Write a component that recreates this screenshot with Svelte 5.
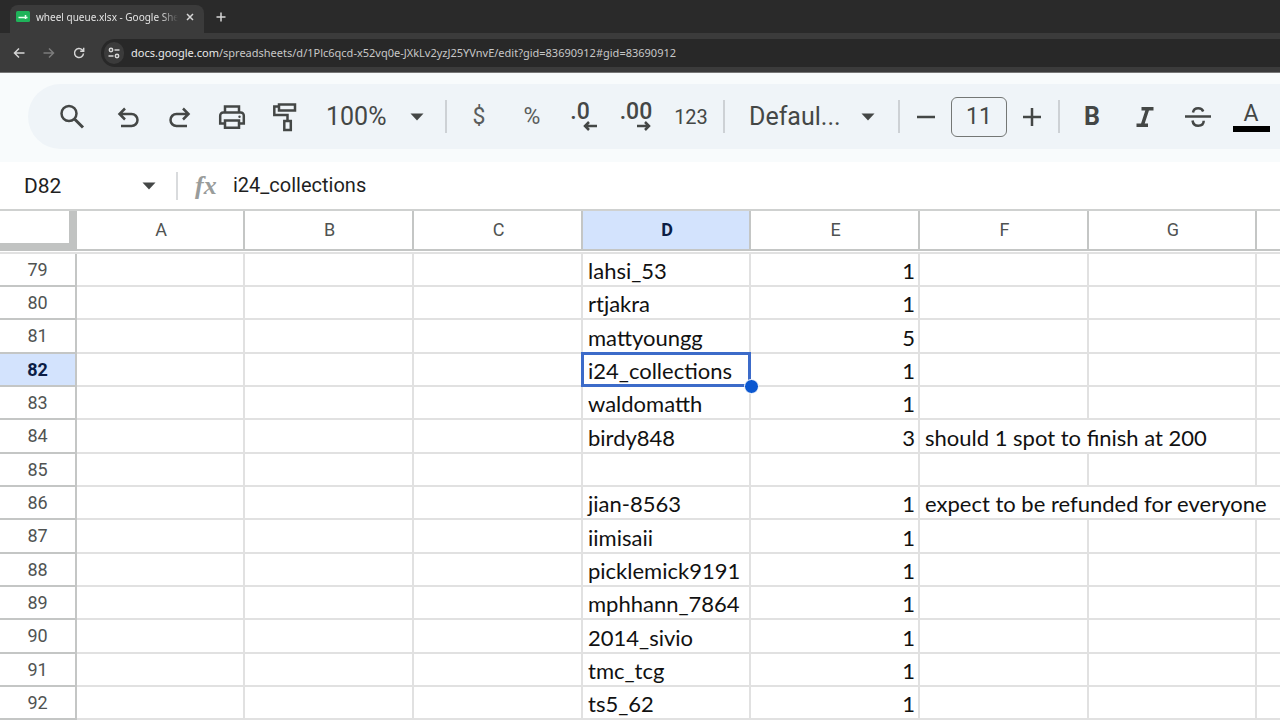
<script lang="ts">
  type Row = { n: number; name?: string; spots?: number; note?: string; span?: number };

  const columns = ['A', 'B', 'C', 'D', 'E', 'F', 'G', 'H', 'I', 'J', 'K', 'L'];
  const selectedRow = 82;
  const selectedColumn = 'D';

  const rows: Row[] = [
    { n: 79, name: 'lahsi_53', spots: 1 },
    { n: 80, name: 'rtjakra', spots: 1 },
    { n: 81, name: 'mattyoungg', spots: 5 },
    { n: 82, name: 'i24_collections', spots: 1 },
    { n: 83, name: 'waldomatth', spots: 1 },
    { n: 84, name: 'birdy848', spots: 3, note: 'should 1 spot to finish at 200', span: 2 },
    { n: 85 },
    { n: 86, name: 'jian-8563', spots: 1, note: 'expect to be refunded for everyone', span: 3 },
    { n: 87, name: 'iimisaii', spots: 1 },
    { n: 88, name: 'picklemick9191', spots: 1 },
    { n: 89, name: 'mphhann_7864', spots: 1 },
    { n: 90, name: '2014_sivio', spots: 1 },
    { n: 91, name: 'tmc_tcg', spots: 1 },
    { n: 92, name: 'ts5_62', spots: 1 }
  ];

  let zoom = $state('100%');
  let font = $state('Defaul...');
  let fontSize = $state(11);
  let formula = $state('i24_collections');
</script>

{#snippet caret()}
  <svg class="caret" width="14" height="8" viewBox="0 0 14 8" aria-hidden="true"><path d="M0.5 0.5h13L7 7.5z" fill="#444746" /></svg>
{/snippet}

<div class="window">
  <header class="browser">
    <div class="tabs">
      <div class="tab">
        <svg width="14" height="12" viewBox="0 0 14 12" aria-hidden="true">
          <rect width="14" height="11" rx="1.5" fill="#1fb35a" />
          <path d="M2.500 6.500h9M9.500 4v4" stroke="#e8fff0" stroke-width="1.500" fill="none" />
        </svg>
        <span class="tab-title">wheel queue.xlsx - Google Sheets</span>
        <button class="chrome-btn close" aria-label="Close tab">
          <svg width="8" height="8" viewBox="0 0 8 8"><path d="M1 1l6 6M7 1L1 7" /></svg>
        </button>
      </div>
      <button class="chrome-btn new-tab" aria-label="New tab">
        <svg width="10" height="10" viewBox="0 0 10 10"><path d="M5 0.5v9M0.5 5h9" /></svg>
      </button>
    </div>
    <div class="nav">
      <button class="chrome-btn" aria-label="Back">
        <svg width="12" height="12" viewBox="0 0 12 12"><path d="M11.500 6H1.500M6 1.500L1.500 6L6 10.500" /></svg>
      </button>
      <button class="chrome-btn dim" aria-label="Forward">
        <svg width="12" height="12" viewBox="0 0 12 12"><path d="M0.500 6h10M6 1.500L10.500 6L6 10.500" /></svg>
      </button>
      <button class="chrome-btn" aria-label="Reload">
        <svg width="12" height="12" viewBox="0 0 12 12"><path d="M10.500 6.500a4.500 4.500 0 1 1-1.300-3.700L10.500 4M10.700 0.800V4.300H7.200" /></svg>
      </button>
      <div class="omnibox">
        <button class="site-info" aria-label="View site information">
          <svg width="12" height="12" viewBox="0 0 12 12"><circle cx="3" cy="3" r="1.700" /><path d="M6.500 3h5M0.500 9h5" /><circle cx="9" cy="9" r="1.700" /></svg>
        </button>
        <a class="url" href="#gid=83690912"><b>docs.google.com</b>/spreadsheets/d/1Plc6qcd-x52vq0e-JXkLv2yzJ25YVnvE/edit?gid=83690912#gid=83690912</a>
      </div>
    </div>
  </header>

  <div class="toolbar-wrap">
    <div class="toolbar" role="toolbar" aria-label="Main">
      <button class="tool search" aria-label="Search the menus">
        <svg width="26" height="26" viewBox="0 0 26 26"><circle cx="10" cy="9.500" r="7.500" /><path d="M15.500 15L24 23.500" stroke-width="3" /></svg>
      </button>
      <button class="tool" aria-label="Undo">
        <svg width="22" height="22" viewBox="0 0 22 22"><path d="M4 20h10.500a5.500 5.500 0 0 0 0-12H3M8 2.500L2.500 8L8 13.500" /></svg>
      </button>
      <button class="tool" aria-label="Redo">
        <svg width="22" height="22" viewBox="0 0 22 22"><path d="M18 20H7.500a5.500 5.500 0 0 1 0-12H19M14 2.500L19.500 8L14 13.500" /></svg>
      </button>
      <button class="tool" aria-label="Print">
        <svg width="28" height="26" viewBox="0 0 28 26">
          <path d="M7 8.500V2.500h14v6M7 19.500H2.200V11.500a3 3 0 0 1 3-3h17.600a3 3 0 0 1 3 3v8H21M7 16.500h14v7.300H7z" />
          <circle cx="21.500" cy="12.700" r="1.200" fill="#444746" stroke="none" />
        </svg>
      </button>
      <button class="tool" aria-label="Paint format">
        <svg width="26" height="30" viewBox="0 0 26 30"><path d="M8 2.500h16v6H8zM8 4.500H3.300v8.500H16.500v6M13.300 19h6.500v9h-6.500z" /></svg>
      </button>
      <label class="dropdown zoom">
        <select aria-label="Zoom" bind:value={zoom}><option>100%</option><option>75%</option></select>
        {@render caret()}
      </label>
      <span class="divider"></span>
      <div class="group">
        <button class="tool text" aria-label="Format as currency">$</button>
        <button class="tool text" aria-label="Format as percent">%</button>
        <button class="tool decimal fewer" aria-label="Decrease decimal places">
          <span>.0</span>
          <svg width="14" height="10" viewBox="0 0 14 10"><path d="M14 5H2M6 1L2 5L6 9" /></svg>
        </button>
        <button class="tool decimal" aria-label="Increase decimal places">
          <span>.00</span>
          <svg width="14" height="10" viewBox="0 0 14 10"><path d="M0 5h12M8 1l4 4L8 9" /></svg>
        </button>
        <button class="tool number" aria-label="More formats">123</button>
      </div>
      <span class="divider"></span>
      <label class="dropdown font">
        <select aria-label="Font" bind:value={font}><option>Defaul...</option><option>Arial</option></select>
        {@render caret()}
      </label>
      <span class="divider"></span>
      <button class="tool step" aria-label="Decrease font size" onclick={() => fontSize--}>
        <svg width="18" height="18" viewBox="0 0 18 18"><path d="M0 9h18" /></svg>
      </button>
      <input class="size" aria-label="Font size" bind:value={fontSize} />
      <button class="tool step" aria-label="Increase font size" onclick={() => fontSize++}>
        <svg width="18" height="18" viewBox="0 0 18 18"><path d="M0 9h18M9 0v18" /></svg>
      </button>
      <span class="divider"></span>
      <div class="group">
        <button class="tool bold" aria-label="Bold">B</button>
        <button class="tool" aria-label="Italic">
          <svg width="18" height="20" viewBox="0 0 18 20"><path d="M5.500 1.800H17.500M0.500 18.200H12M11.700 1.800L6.300 18.200" stroke-width="3.500" /></svg>
        </button>
        <button class="tool" aria-label="Strikethrough">
          <svg width="26" height="22" viewBox="0 0 26 22"><path d="M0 10.500h26M8 6.500c0.500-3 2.500-4.300 5.200-4.300 2.500 0 4.300 1.200 5 3.300M7.500 14.500c0.500 3.500 2.700 5.300 5.700 5.300s5.500-1.500 5.500-5" /></svg>
        </button>
        <button class="tool color" aria-label="Text color"><span>A</span></button>
      </div>
    </div>
  </div>

  <div class="formula-bar">
    <label class="name-box">
      <input aria-label="Name box" value="D82" />
      {@render caret()}
    </label>
    <span class="fx">fx</span>
    <input class="formula" aria-label="Formula" bind:value={formula} />
  </div>

  <div class="sheet">
    <table>
      <colgroup>
        <col class="row-col" />
        {#each columns as column (column)}
          <col class={['B', 'C', 'E', 'F'].includes(column) ? 'wide' : 'narrow'} />
        {/each}
      </colgroup>
      <thead>
        <tr>
          <td class="corner"></td>
          {#each columns as column (column)}
            <th scope="col" class:active={column === selectedColumn}>{column}</th>
          {/each}
        </tr>
        <tr class="frozen"><td colspan={columns.length + 1}></td></tr>
      </thead>
      <tbody>
        {#each rows as row (row.n)}
          <tr>
            <th scope="row" class:active={row.n === selectedRow}>{row.n}</th>
            <td></td>
            <td></td>
            <td></td>
            <td class:selected={row.n === selectedRow}>{row.name ?? ''}</td>
            <td class="num">{row.spots ?? ''}</td>
            <td colspan={row.span ?? 1}>{row.note ?? ''}</td>
            {#each columns.slice(5 + (row.span ?? 1)) as column (column)}
              <td></td>
            {/each}
          </tr>
        {/each}
      </tbody>
    </table>
  </div>
</div>

<style>
  :global(body) {
    margin: 0;
    background: #fff;
  }

  .window {
    height: 100vh;
    display: flex;
    flex-direction: column;
    overflow: hidden;
    font-family: Roboto, 'Liberation Sans', sans-serif;
    color: #444746;
  }

  button,
  input,
  select {
    font: inherit;
    color: inherit;
    border: 0;
    padding: 0;
    margin: 0;
    background: none;
    box-sizing: border-box;
  }

  svg {
    display: block;
    flex: none;
  }

  /* Browser chrome */
  .browser {
    flex: none;
    background: #3b3b3b;
    border-bottom: 1px solid #777;
    font-family: 'Noto Sans', 'Open Sans', sans-serif;
    color: #e3e3e3;
  }

  .tabs {
    display: flex;
    align-items: flex-end;
    height: 33px;
    padding-left: 10px;
    background: #2a2a2a;
  }

  .tab {
    display: flex;
    align-items: center;
    width: 194px;
    height: 28px;
    box-sizing: border-box;
    padding: 0 8px 4px 6px;
    gap: 6px;
    background: #3b3b3b;
    border-radius: 8px 8px 0 0;
  }

  .tab-title {
    flex: 1;
    overflow: hidden;
    white-space: nowrap;
    font-size: 10px;
    line-height: 16px;
    mask-image: linear-gradient(to right, #000 88%, transparent);
  }

  .chrome-btn {
    display: flex;
    align-items: center;
    justify-content: center;
    width: 30px;
    height: 28px;
  }

  .chrome-btn svg,
  .site-info svg {
    fill: none;
    stroke: #d6d6d6;
    stroke-width: 1.5;
  }

  .chrome-btn.dim svg {
    stroke: #7c7c7c;
  }

  .close {
    width: 12px;
  }

  .new-tab {
    padding-bottom: 4px;
    width: 34px;
  }

  .nav {
    display: flex;
    align-items: center;
    height: 39px;
    padding-left: 4px;
  }

  .omnibox {
    flex: 1;
    display: flex;
    align-items: center;
    gap: 7px;
    height: 28px;
    margin-left: 7px;
    padding-left: 3px;
    background: #282828;
    border-radius: 14px 0 0 14px;
  }

  .site-info {
    display: flex;
    align-items: center;
    justify-content: center;
    width: 20px;
    height: 22px;
    border-radius: 11px;
    background: #3b3b3b;
  }

  .url {
    color: #c7c7c7;
    text-decoration: none;
    white-space: nowrap;
    font-size: 11px;
    line-height: 16px;
  }

  .url b {
    font-weight: 400;
    color: #e8e8e8;
  }

  /* Sheets toolbar */
  .toolbar-wrap {
    flex: none;
    padding: 11px 0 13px 28px;
    background: #f8fbfc;
  }

  .toolbar {
    display: flex;
    align-items: center;
    height: 65px;
    padding-left: 18px;
    border-radius: 33px 0 0 33px;
    background: #eff4f8;
    overflow: hidden;
  }

  .tool {
    display: flex;
    flex: none;
    align-items: center;
    justify-content: center;
    width: 52px;
    height: 48px;
  }

  .tool svg {
    fill: none;
    stroke: #444746;
    stroke-width: 2.5;
  }

  .search {
    margin-right: 4px;
  }

  .group {
    display: flex;
    gap: 1px;
  }

  .divider {
    flex: none;
    width: 2px;
    height: 33px;
    margin: 0 6px;
    background: #cdd1d5;
  }

  .dropdown {
    display: flex;
    flex: none;
    align-items: center;
    box-sizing: border-box;
    font-size: 25px;
    line-height: 32px;
  }

  .dropdown select {
    flex: 1;
    appearance: none;
    min-width: 0;
  }

  .zoom {
    width: 129px;
    padding: 0 15px 0 16px;
  }

  .font {
    width: 161px;
    padding: 0 17px 0 18px;
  }

  .text {
    font-size: 23px;
    color: #5a5d5c;
  }

  .number {
    font-size: 20px;
  }

  .decimal {
    flex-direction: column;
    padding-right: 2px;
    font-size: 23px;
    font-weight: 500;
    line-height: 18px;
  }

  .decimal svg {
    margin-left: 14px;
  }

  .decimal span {
    margin-right: 2px;
  }

  .fewer {
    padding-right: 8px;
  }

  .fewer svg {
    margin-left: 18px;
  }

  .step {
    width: 40px;
  }

  .size {
    flex: none;
    width: 56px;
    height: 40px;
    margin: 0 5px;
    border: 1px solid #747775;
    border-radius: 6px;
    text-align: center;
    font-size: 23px;
  }

  .bold {
    font-size: 25px;
    font-weight: 700;
  }

  .color span {
    width: 37px;
    border-bottom: 6px solid #000;
    font-size: 23px;
    line-height: 25px;
  }

  /* Formula bar */
  .formula-bar {
    display: flex;
    flex: none;
    align-items: center;
    height: 47px;
    font-size: 20px;
  }

  .name-box {
    display: flex;
    align-items: center;
    width: 178px;
    height: 28px;
    box-sizing: border-box;
    padding: 0 20px 0 24px;
    border-right: 2px solid #d9dbdd;
    font-size: 21px;
    color: #1f1f1f;
  }

  .name-box input {
    flex: 1;
    min-width: 0;
  }

  .fx {
    width: 38px;
    margin-left: 17px;
    font-family: 'Liberation Serif', serif;
    font-style: italic;
    font-weight: 700;
    font-size: 26px;
    line-height: 30px;
    color: #999c9b;
  }

  .formula {
    flex: 1;
    padding-bottom: 2px;
    color: #1f1f1f;
  }

  /* Grid */
  .sheet {
    flex: 1;
    min-height: 0;
    overflow: hidden;
    border-top: 2px solid #cfd1d0;
  }

  table {
    width: 0;
    table-layout: fixed;
    border-collapse: separate;
    border-spacing: 0;
  }

  .row-col {
    width: 77px;
  }

  .narrow {
    width: 168px;
  }

  .wide {
    width: 169px;
  }

  th,
  td {
    box-sizing: border-box;
    padding: 0;
    border: 0 solid #e1e1e1;
    border-width: 0 2px 2px 0;
  }

  th {
    border-color: #c4c6c5;
    font-size: 18px;
    font-weight: 400;
    line-height: 24px;
    color: #505352;
  }

  th.active {
    background: #d3e3fd;
    font-weight: 700;
    color: #0b1d45;
  }

  thead th {
    height: 40px;
    padding-left: 2px;
  }

  .corner {
    border: 0 solid #c1c3c2;
    border-width: 0 8px 8px 0;
  }

  .frozen td {
    height: 3px;
    border-right: 0;
  }

  tbody tr {
    height: 33px;
  }

  tbody tr:nth-child(3n) {
    height: 34px;
  }

  tbody td {
    padding: 3px 3px 0 5px;
    font-family: Lato, 'Liberation Sans', sans-serif;
    font-size: 22px;
    line-height: 28px;
    white-space: nowrap;
    color: #111;
  }

  td.num {
    text-align: right;
  }

  td.selected {
    position: relative;
  }

  .selected::before {
    content: '';
    position: absolute;
    inset: -2px;
    border: 3px solid #3c6bc9;
  }

  .selected::after {
    content: '';
    position: absolute;
    right: -10px;
    bottom: -9px;
    width: 13px;
    height: 13px;
    border: 1px solid #fff;
    border-radius: 50%;
    background: #0b57d0;
    z-index: 1;
  }
</style>
